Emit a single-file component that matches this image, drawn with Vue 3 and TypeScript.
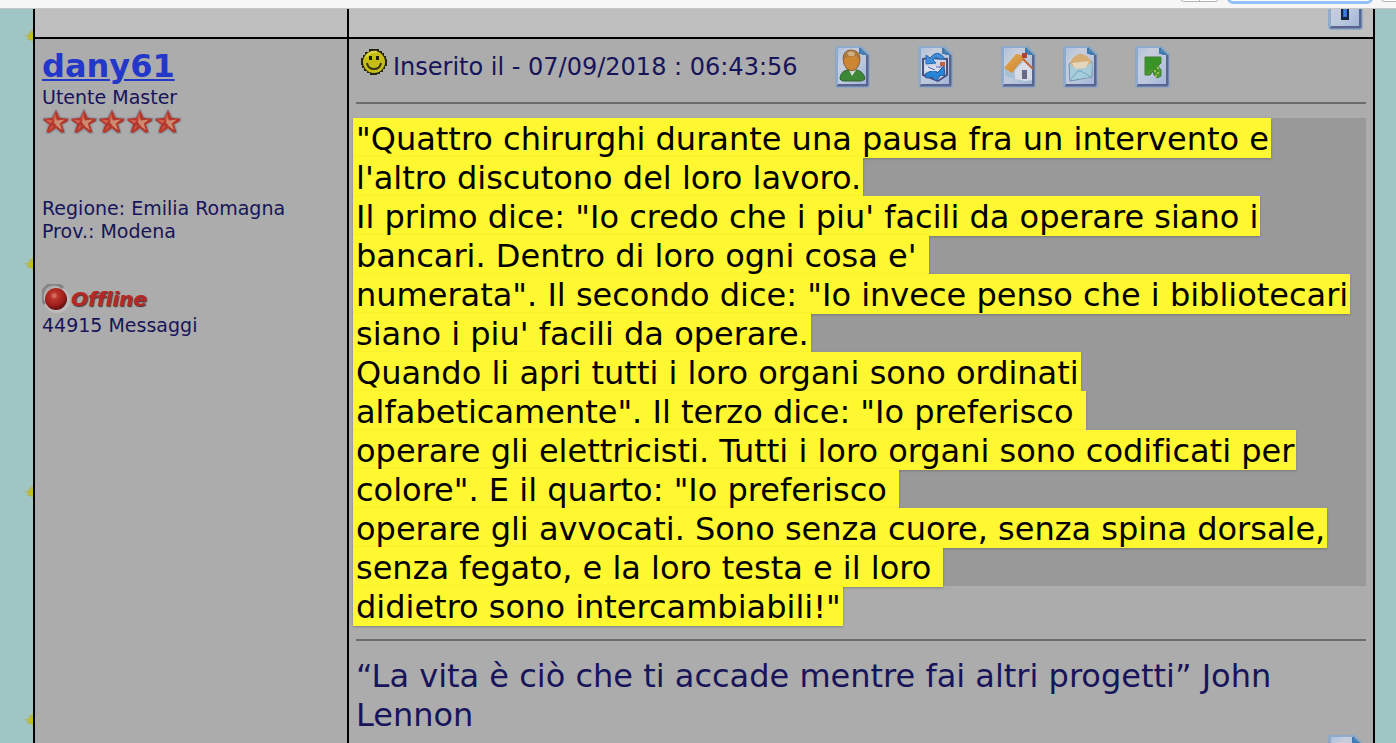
<script setup lang="ts">
interface PostAction {
  name: string
  label: string
}

const actions: PostAction[] = [
  { name: 'profile', label: 'Profilo' },
  { name: 'reply', label: 'Rispondi' },
  { name: 'home', label: 'Homepage' },
  { name: 'mail', label: 'Messaggio privato' },
  { name: 'jump', label: 'Vai al messaggio' },
]

const lines: string[] = [
  '"Quattro chirurghi durante una pausa fra un intervento e',
  "l'altro discutono del loro lavoro.",
  'Il primo dice: "Io credo che i piu\' facili da operare siano i',
  "bancari. Dentro di loro ogni cosa e' ",
  'numerata". Il secondo dice: "Io invece penso che i bibliotecari',
  "siano i piu' facili da operare.",
  'Quando li apri tutti i loro organi sono ordinati',
  'alfabeticamente". Il terzo dice: "Io preferisco ',
  'operare gli elettricisti. Tutti i loro organi sono codificati per',
  'colore". E il quarto: "Io preferisco ',
  'operare gli avvocati. Sono senza cuore, senza spina dorsale,',
  'senza fegato, e la loro testa e il loro ',
  'didietro sono intercambiabili!"',
]
</script>

<template>
  <div class="screen">
    <svg class="defs" aria-hidden="true">
      <defs>
        <linearGradient id="paper" x1="0" y1="0" x2="1" y2="1">
          <stop offset="0" stop-color="#a9c0dc" />
          <stop offset=".3" stop-color="#c8cddb" />
          <stop offset=".6" stop-color="#bcc8dd" />
          <stop offset="1" stop-color="#a3b6d8" />
        </linearGradient>
        <radialGradient id="ball" cx=".42" cy=".35" r=".6">
          <stop offset="0" stop-color="#dc8177" />
          <stop offset=".3" stop-color="#b93229" />
          <stop offset=".75" stop-color="#a01f1c" />
          <stop offset="1" stop-color="#691412" />
        </radialGradient>
        <linearGradient id="roof" x1="0" y1="0" x2="1" y2="1">
          <stop offset="0" stop-color="#dfaa5c" />
          <stop offset="1" stop-color="#d38222" />
        </linearGradient>
        <symbol id="sheet" viewBox="0 0 35 42">
          <path d="M2 0H27L35 8V39Q35 42 32 42H3Q0 42 0 39V2Q0 0 2 0Z" fill="#87a6c9" opacity=".75" />
          <path d="M2 39H32V9" fill="none" stroke="#59648f" stroke-width="3" stroke-linejoin="round" />
          <path d="M2 1H25L31 8V38H2Z" fill="url(#paper)" />
          <path d="M2 39V1H25" fill="none" stroke="#8eabcd" stroke-width="2" />
          <path d="M25 1L33 9H28L25 7Z" fill="#4c83b3" />
          <path d="M25 2V7L31 8" fill="none" stroke="#3d79b0" stroke-width="2" />
        </symbol>
      </defs>
    </svg>

    <header class="toolbar">
      <button class="tool split" type="button" aria-label="Navigazione"><span></span></button>
      <input class="search" type="search" aria-label="Cerca" />
      <button class="tool" type="button" aria-label="Opzioni"></button>
    </header>

    <div class="page">
      <aside class="gutter">
        <svg v-for="n in 4" :key="n" class="spark" viewBox="0 0 8 12" aria-hidden="true">
          <path d="M0 5H3L5 1L8 0V12L5 10H2L3 7L0 6Z" fill="#b0b85a" />
          <path d="M4 5L8 3V9H5Z" fill="#c6c014" />
        </svg>
      </aside>

      <main class="forum">
        <div class="row previous">
          <div class="cell"></div>
          <div class="cell tail">
            <button class="action" type="button" aria-label="Torna in alto">
              <svg viewBox="0 0 35 42" aria-hidden="true">
                <use href="#sheet" />
                <path d="M13 15H21V32H13Z" fill="#14233f" />
                <path d="M15 15H19V29H15Z" fill="#2e69d8" />
                <path d="M17 17V29" stroke="#55a4e8" stroke-dasharray="2 1" />
              </svg>
            </button>
          </div>
        </div>

        <article class="row post">
          <section class="cell author">
            <a class="name" href="#dany61">dany61</a>
            <span>Utente Master</span>
            <div class="stars" role="img" aria-label="5 stelle">
              <svg v-for="n in 5" :key="n" viewBox="0 0 28 27" aria-hidden="true">
                <path d="M13 0H15L19 8L28 9V13L22 16L24 26H19L14 22L8 26H3L5 16L0 12V9L9 8Z" fill="#6f8496" opacity=".5" />
                <path d="M14 1L18 9L27 10L26 13L20 16L23 24L20 25L14 20L7 25L4 24L7 16L1 12V10L10 9Z" fill="#b3382c" />
                <path d="M13 7L15 12L23 11L18 15L20 22L15 18L12 14Z" fill="#cf8a6f" />
                <path d="M3 11L11 12L8 15ZM7 23L9 18L12 17ZM13 4L14 10L11 11Z" fill="#d0604c" />
              </svg>
            </div>
            <div class="place">
              <span>Regione: Emilia Romagna</span>
              <span>Prov.: Modena</span>
            </div>
            <div class="status">
              <svg viewBox="0 0 29 30" aria-hidden="true">
                <circle cx="15" cy="16" r="13" fill="#bdbdbd" />
                <path d="M3 20A12 12 0 0 1 21 4" fill="none" stroke="#858585" stroke-width="3" />
                <circle cx="14" cy="15" r="11" fill="url(#ball)" />
              </svg>
              <em>Offline</em>
            </div>
            <span>44915 Messaggi</span>
          </section>

          <section class="cell body">
            <div class="meta">
              <svg class="smile" viewBox="0 0 26 26" aria-hidden="true">
                <path d="M8 0H18V2H21V4H23V7H25V10H26V17H24V20H22V23H19V25H16V26H9V24H6V22H3V19H1V16H0V9H2V6H4V3H8Z" fill="#252510" />
                <circle cx="13" cy="13" r="11" fill="#c6bd16" />
                <path d="M5 8Q9 2 16 3" fill="none" stroke="#ddd747" stroke-width="2" />
                <path d="M8 7H11V11H8ZM15 7H18V11H15Z" fill="#1d1c0b" />
                <path d="M6 14Q7 20 13 20Q19 20 20 14" fill="none" stroke="#393510" stroke-width="2" />
              </svg>
              <time datetime="2018-09-07T06:43:56">Inserito il - 07/09/2018 : 06:43:56</time>
              <div class="actions">
                <button
                  v-for="action in actions"
                  :key="action.name"
                  type="button"
                  class="action"
                  :class="action.name"
                  :aria-label="action.label"
                >
                  <svg viewBox="0 0 35 42" aria-hidden="true">
                    <use href="#sheet" />
                    <g v-if="action.name === 'profile'">
                      <path d="M5 33Q5 26 12 24H22Q29 26 30 33Q28 35 25 35H9Q6 35 5 33Z" fill="#3c8836" stroke="#34632f" />
                      <path d="M14 24L17 30L21 24Z" fill="#d6ddd5" />
                      <path d="M8 12Q9 4 16 4Q24 4 25 12Q25 20 20 24Q16 26 12 23Q8 19 8 12Z" fill="#cc8633" stroke="#806040" />
                      <path d="M9 13Q9 5 16 5Q24 5 24 13L21 10L12 11Z" fill="#a87940" />
                      <path d="M12 7L16 5L20 7L19 10L14 10Z" fill="#d0ae86" />
                    </g>
                    <g v-else-if="action.name === 'reply'">
                      <path d="M5 13L11 12L29 13V29L20 35L5 29Z" fill="#cdd4e6" stroke="#4a507e" stroke-width="2" />
                      <path d="M8 9L12 12Q20 2 27 13L22 13Q17 10 15 14L18 17L8 18Z" fill="#438fd7" stroke="#2569b2" />
                      <path d="M7 28L17 23L19 27L26 20L27 30L23 29L18 35L14 31L8 32Z" fill="#2684d5" stroke="#285899" />
                      <path d="M22 16H27V20H22Z" fill="#bb6240" />
                      <path d="M7 20H21V25H7Z" fill="#d9dfed" />
                      <path d="M10 21L17 24M18 21H26" stroke="#5960b8" />
                    </g>
                    <g v-else-if="action.name === 'home'">
                      <path d="M4 23L19 15L31 22V36L19 35L4 30Z" fill="#a8c0d4" />
                      <path d="M14 24L23 15L31 23V34L25 35L14 33Z" fill="#d8dce6" />
                      <path d="M3 22L15 8L26 10L17 19L11 27Z" fill="url(#roof)" />
                      <path d="M22 13L32 23" fill="none" stroke="#bd6a38" stroke-width="2" />
                      <path d="M21 7H26V12H21Z" fill="#b44232" />
                      <path d="M21 24H26V33H21Z" fill="#656b86" />
                    </g>
                    <g v-else-if="action.name === 'mail'">
                      <path d="M6 18L17 8L29 16V31L7 35Z" fill="#9fc9dd" stroke="#728fab" />
                      <path d="M7 17Q10 9 17 8Q25 8 28 16L23 22L12 23Z" fill="#d4ae75" />
                      <path d="M9 17L26 15L23 22L12 23Z" fill="#e3d6bd" />
                      <path d="M7 19L17 25L29 17L28 31L7 34Z" fill="#a7cdda" />
                      <path d="M7 34L15 25L18 25L28 31" fill="none" stroke="#6ea4ba" />
                    </g>
                    <g v-else>
                      <path d="M10 11H26V17L23 20L26 24V30L22 32L19 29L18 25L15 29H10Z" fill="#4a9933" stroke="#3d7e31" />
                      <path d="M11 12H25V17L21 20L24 28L20 25L17 22L12 27Z" fill="#399427" />
                      <path d="M19 25H21M22 22H24M22 27H24M20 30H22" stroke="#a4bc44" stroke-width="2" />
                    </g>
                  </svg>
                </button>
              </div>
            </div>

            <blockquote class="quote">
              <p v-for="line in lines" :key="line"><mark>{{ line }}</mark></p>
            </blockquote>

            <p class="signature">“La vita è ciò che ti accade mentre fai altri progetti” John Lennon</p>
            <div class="end">
              <button class="action" type="button" aria-label="Torna in alto">
                <svg viewBox="0 0 35 42" aria-hidden="true"><use href="#sheet" /></svg>
              </button>
            </div>
          </section>
        </article>
      </main>
    </div>
  </div>
</template>

<style>
body {
  margin: 0;
}
</style>

<style scoped>
.screen {
  height: 100vh;
  display: flex;
  flex-direction: column;
  overflow: hidden;
  background: #9fc5c4;
  color: #17145a;
  font-family: Verdana, "DejaVu Sans", sans-serif;
  font-size: 19px;
  line-height: 23px;
  font-variant-ligatures: none;
}

.defs {
  position: absolute;
  width: 0;
  height: 0;
}

.toolbar {
  flex: none;
  box-sizing: border-box;
  height: 9px;
  padding-bottom: 4px;
  display: flex;
  justify-content: flex-end;
  align-items: flex-end;
  gap: 8px;
  overflow: hidden;
  background: #f6f6f6;
  border-bottom: 1px solid #c6c6c6;
}

.tool,
.search {
  box-sizing: border-box;
  flex: none;
  height: 28px;
  margin: 0;
  padding: 0;
  border: 1px solid #b4b4b4;
  border-radius: 4px;
  background: #fff;
}

.tool {
  width: 39px;
  margin-bottom: 2px;
}

.tool:last-child {
  width: 15px;
  border-right: 0;
  border-radius: 4px 0 0 4px;
}

.split span {
  display: block;
  width: 1px;
  height: 26px;
  margin: 0 auto;
  background: #b4b4b4;
}

.search {
  width: 146px;
  border: 3px solid #91c3f8;
  border-radius: 6px;
}

.page {
  flex: 1;
  min-height: 0;
  display: flex;
  padding-right: 21px;
}

.gutter {
  flex: none;
  width: 33px;
  padding-top: 21px;
  display: flex;
  flex-direction: column;
  align-items: flex-end;
  gap: 216px;
}

.spark {
  flex: none;
  width: 8px;
  height: 12px;
}

.forum {
  flex: 1;
  min-width: 0;
  display: flex;
  flex-direction: column;
  border-right: 2px solid #000;
}

.row {
  display: grid;
  grid-template-columns: 314px minmax(0, 1fr);
  background: #acacac;
}

.cell {
  border-left: 2px solid #000;
}

.previous {
  flex: none;
  height: 28px;
  background: #bfbfbf;
  border-bottom: 2px solid #000;
}

.tail {
  display: flex;
  justify-content: flex-end;
  align-items: flex-end;
  padding: 0 10px 7px 0;
  height: 21px;
  overflow: hidden;
}

.post {
  flex: 1;
}

.author {
  padding: 8px 7px;
  display: flex;
  flex-direction: column;
  align-items: flex-start;
}

.name {
  color: #2338c9;
  font-size: 32px;
  line-height: 39px;
  font-weight: bold;
  text-decoration-thickness: 2px;
  text-underline-offset: 2px;
}

.stars {
  display: flex;
  height: 26px;
}

.stars svg {
  width: 28px;
  height: 26px;
}

.place {
  display: flex;
  flex-direction: column;
  margin: 62px 0 41px;
}

.status {
  display: flex;
  align-items: center;
  height: 30px;
}

.status svg {
  width: 29px;
  height: 30px;
}

.status em {
  color: #b52825;
  font-size: 20px;
  font-weight: bold;
  text-shadow: 1px 1px 1px #443434;
}

.body {
  padding: 7px;
}

.meta {
  display: flex;
  align-items: flex-start;
  height: 56px;
  padding-left: 5px;
  border-bottom: 2px solid #6c6c6c;
}

.smile {
  flex: none;
  width: 26px;
  height: 26px;
  margin: 3px 6px 0 0;
}

.meta time {
  font-size: 24px;
  line-height: 42px;
  white-space: nowrap;
}

.actions {
  display: flex;
  margin-left: 37px;
}

.action {
  flex: none;
  width: 35px;
  height: 42px;
  padding: 0;
  border: 0;
  background: none;
  cursor: pointer;
}

.action svg {
  display: block;
  width: 35px;
  height: 42px;
}

.reply,
.home {
  margin-left: 48px;
}

.mail {
  margin-left: 27px;
}

.jump {
  margin-left: 37px;
}

.quote {
  margin: 14px 0 0;
  padding-bottom: 14px;
  border-bottom: 2px solid #6c6c6c;
  color: #000;
  font-size: 32px;
  line-height: 39px;
}

.quote p {
  margin: 0;
  height: 39px;
  background: #999;
  white-space: pre;
}

.quote p:last-child {
  background: none;
}

.quote mark {
  display: inline-block;
  height: 38px;
  margin-left: -3px;
  padding: 2px 2px 0 3px;
  background: #fff72f;
  color: #000;
  box-shadow: 0 1px 2px #66666699;
}

.signature {
  margin: 16px 0 0;
  font-size: 32px;
  line-height: 39px;
}

.end {
  display: flex;
  justify-content: flex-end;
  padding-right: 3px;
}
</style>
